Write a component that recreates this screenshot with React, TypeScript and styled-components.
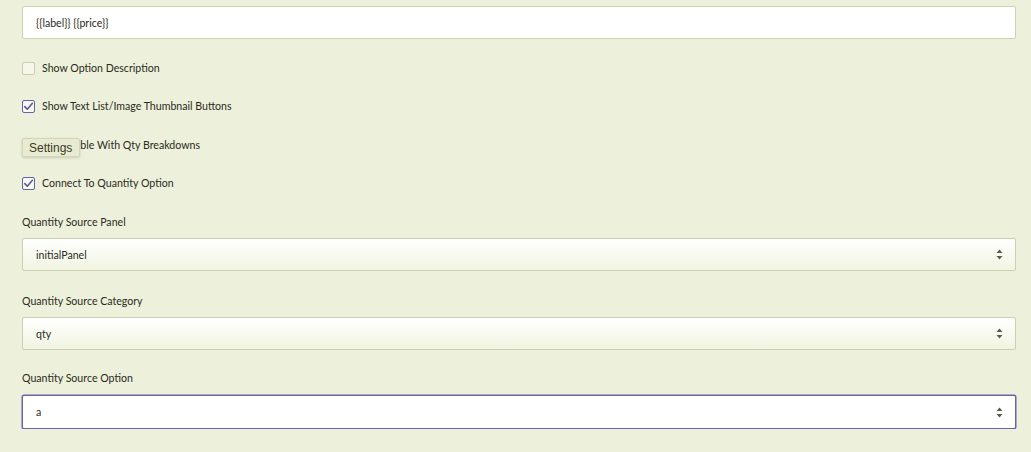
import React from "react";
import styled, { createGlobalStyle } from "styled-components";

const Global = createGlobalStyle`
  html, body { margin: 0; padding: 0; }
  body {
    background: #edf0da;
    font-family: Lato, "Open Sans", sans-serif;
    color: #2b2b22;
  }
`;

const Page = styled.div`
  position: relative;
  padding: 6px 15px 0 22px;
  display: flex;
  flex-direction: column;
`;

const TextInput = styled.div`
  height: 33px;
  box-sizing: border-box;
  border: 1px solid #cfd1b4;
  border-radius: 2px;
  background: #ffffff;
  display: flex;
  align-items: center;
  padding-left: 13px;
  font-size: 10.6px;
`;

const CheckRow = styled.label<{ $mt: number }>`
  display: flex;
  align-items: center;
  gap: 7px;
  height: 14px;
  font-size: 10.6px;
  margin-top: ${(p) => p.$mt}px;
`;

const Box = styled.span<{ $checked?: boolean }>`
  width: 13px;
  height: 13px;
  box-sizing: border-box;
  border-radius: 2px;
  border: 1px solid ${(p) => (p.$checked ? "#6a62a8" : "#cbccb3")};
  background: ${(p) => (p.$checked ? "#f7f8ee" : "#f6f7ea")};
  display: flex;
  align-items: center;
  justify-content: center;
`;

const FieldLabel = styled.div<{ $mt: number }>`
  font-size: 10.6px;
  margin-top: ${(p) => p.$mt}px;
  height: 14px;
  line-height: 14px;
`;

const Select = styled.div<{ $focused?: boolean; $mt: number }>`
  margin-top: ${(p) => p.$mt}px;
  height: ${(p) => (p.$focused ? 34 : 33)}px;
  box-sizing: border-box;
  border: 1px solid ${(p) => (p.$focused ? "#6a64a6" : "#cdcfb2")};
  border-radius: 2px;
  background: ${(p) =>
    p.$focused ? "#ffffff" : "linear-gradient(#ffffff, #f1f4e1)"};
  display: flex;
  align-items: center;
  justify-content: space-between;
  padding: 0 12px 0 13px;
  font-size: 10.6px;
  box-shadow: ${(p) => (p.$focused ? "0 0 0 0.5px #6a64a6" : "none")};
`;

const Tooltip = styled.div`
  position: absolute;
  left: 22px;
  top: 138px;
  height: 19px;
  width: 58px;
  padding: 0 0 0 6px;
  box-sizing: border-box;
  display: flex;
  align-items: center;
  background: #e8ebcf;
  border: 1px solid #d3d6b8;
  border-radius: 2px;
  box-shadow: 0 1px 3px rgba(0, 0, 0, 0.15);
  font-family: "Liberation Sans", Arial, sans-serif;
  font-size: 12px;
  color: #3a3a2c;
`;

const Check = () => (
  <svg width="11" height="11" viewBox="0 0 11 11">
    <path d="M1.8 5.6 L4.3 8.2 L9.4 2.3" fill="none" stroke="#5e56a0" strokeWidth="1.6" strokeLinecap="round" strokeLinejoin="round" />
  </svg>
);

const Arrows = () => (
  <svg width="7" height="11" viewBox="0 0 7 11">
    <path d="M3.5 0.5 L6.5 4 L0.5 4 Z" fill="#5a5c4a" />
    <path d="M3.5 10.5 L6.5 7 L0.5 7 Z" fill="#5a5c4a" />
  </svg>
);

export default function App() {
  return (
    <>
      <Global />
      <Page>
        <TextInput>{"{{label}} {{price}}"}</TextInput>
        <CheckRow $mt={22}>
          <Box />
          Show Option Description
        </CheckRow>
        <CheckRow $mt={24}>
          <Box $checked>
            <Check />
          </Box>
          Show Text List/Image Thumbnail Buttons
        </CheckRow>
        <CheckRow $mt={25}>
          <Box />
          Show Table With Qty Breakdowns
        </CheckRow>
        <CheckRow $mt={24}>
          <Box $checked>
            <Check />
          </Box>
          Connect To Quantity Option
        </CheckRow>
        <FieldLabel $mt={25}>Quantity Source Panel</FieldLabel>
        <Select $mt={9}>
          initialPanel
          <Arrows />
        </Select>
        <FieldLabel $mt={23}>Quantity Source Category</FieldLabel>
        <Select $mt={9}>
          qty
          <Arrows />
        </Select>
        <FieldLabel $mt={21}>Quantity Source Option</FieldLabel>
        <Select $focused $mt={10}>
          a
          <Arrows />
        </Select>
        <Tooltip>Settings</Tooltip>
      </Page>
    </>
  );
}
